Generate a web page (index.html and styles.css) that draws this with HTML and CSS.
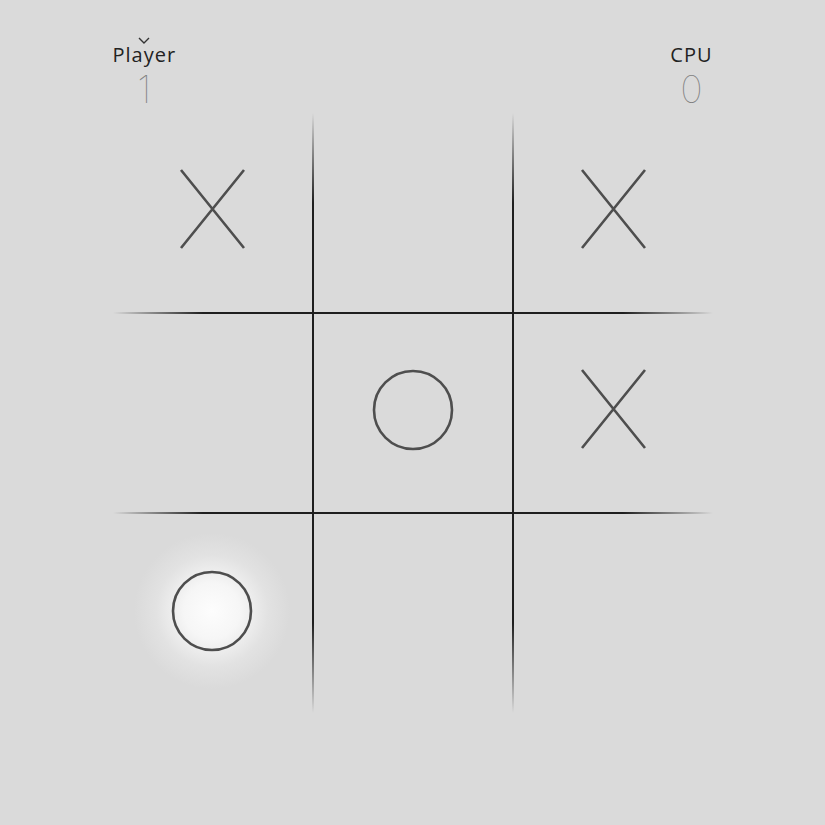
FILE: index.html
```html
<!DOCTYPE html>
<html lang="en">
<head>
<meta charset="utf-8">
<title>Tic Tac Toe</title>
<link rel="stylesheet" href="styles.css">
</head>
<body>
<main class="game">
  <header class="scores">
    <div class="score active">
      <svg class="turn" width="12" height="7" viewBox="0 0 12 7"><path d="M1 1 L6 6 L11 1" fill="none" stroke="#333" stroke-width="1.4"/></svg>
      <span class="name">Player</span>
      <span class="points">1</span>
    </div>
    <div class="score">
      <span class="name">CPU</span>
      <span class="points">0</span>
    </div>
  </header>
  <section class="board">
    <div class="cell"><svg class="mark" viewBox="0 0 200 200"><path d="M68 57 L131 135 M131 57 L68 135"/></svg></div>
    <div class="cell"></div>
    <div class="cell"><svg class="mark" viewBox="0 0 200 200"><path d="M69 57 L132 135 M132 57 L69 135"/></svg></div>
    <div class="cell"></div>
    <div class="cell"><svg class="mark" viewBox="0 0 200 200"><circle cx="100" cy="97" r="39"/></svg></div>
    <div class="cell"><svg class="mark" viewBox="0 0 200 200"><path d="M69 57 L132 135 M132 57 L69 135"/></svg></div>
    <div class="cell glow"><svg class="mark" viewBox="0 0 200 200"><circle cx="99" cy="98" r="39"/></svg></div>
    <div class="cell"></div>
    <div class="cell"></div>
  </section>
</main>
</body>
</html>
```
FILE: styles.css
```css
html, body {
  margin: 0;
  padding: 0;
  background: #dadada;
}
body {
  font-family: "Open Sans", "Liberation Sans", sans-serif;
  color: #222;
}
.game {
  width: 600px;
  margin: 0 auto;
  padding-top: 30px;
}
.scores {
  display: flex;
  justify-content: space-between;
  align-items: flex-end;
  height: 83px;
}
.score {
  display: flex;
  flex-direction: column;
  align-items: center;
}
.turn {
  display: block;
  margin-bottom: -1px;
}
.name {
  font-size: 20px;
  line-height: 24px;
  letter-spacing: 1px;
  color: #222;
}
.points {
  font-family: Inter, "Noto Sans", sans-serif;
  font-weight: 100;
  font-size: 38px;
  line-height: 40px;
  color: #808080;
  margin-top: 2px;
  margin-bottom: 4px;
}
.board {
  display: grid;
  grid-template-columns: repeat(3, 200px);
  grid-template-rows: repeat(3, 200px);
  width: 600px;
  height: 600px;
  background:
    linear-gradient(to bottom, rgba(30,30,30,0) 0, #1e1e1e 90px, #1e1e1e 510px, rgba(30,30,30,0) 600px) 199px 0 / 2px 100% no-repeat,
    linear-gradient(to bottom, rgba(30,30,30,0) 0, #1e1e1e 90px, #1e1e1e 510px, rgba(30,30,30,0) 600px) 399px 0 / 2px 100% no-repeat,
    linear-gradient(to right, rgba(30,30,30,0) 0, #1e1e1e 90px, #1e1e1e 510px, rgba(30,30,30,0) 600px) 0 199px / 100% 2px no-repeat,
    linear-gradient(to right, rgba(30,30,30,0) 0, #1e1e1e 90px, #1e1e1e 510px, rgba(30,30,30,0) 600px) 0 399px / 100% 2px no-repeat;
}
.cell {
  width: 200px;
  height: 200px;
}
.glow {
  background: radial-gradient(circle at 99px 98px, #fdfdfd 0, #f6f6f6 28px, #ececec 42px, #e2e2e2 56px, rgba(218,218,218,0) 78px);
}
.mark {
  display: block;
  width: 200px;
  height: 200px;
  fill: none;
  stroke: #4e4e4e;
  stroke-width: 2.6;
}
```
